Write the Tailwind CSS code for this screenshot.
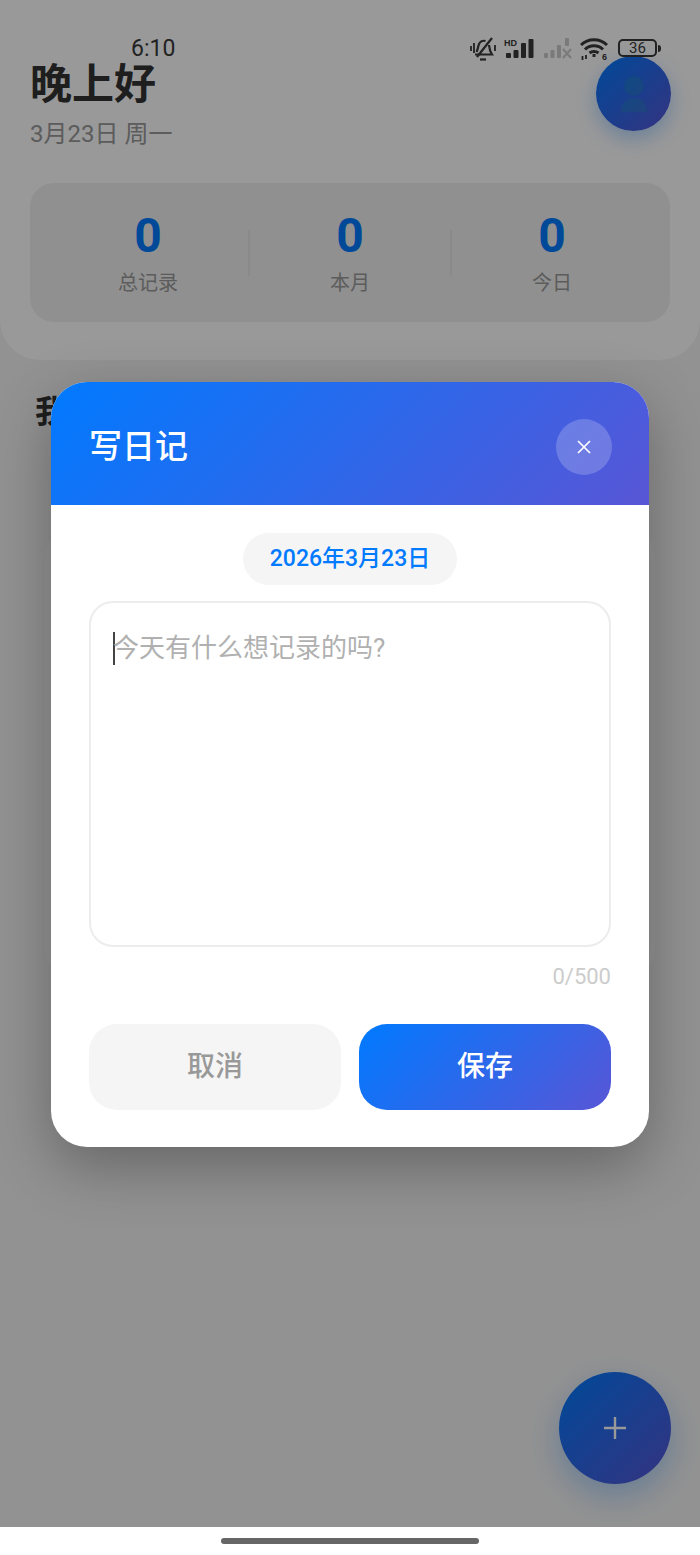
<!DOCTYPE html>
<html lang="zh">
<head>
<meta charset="utf-8">
<script src="https://cdn.jsdelivr.net/npm/@tailwindcss/browser@4"></script>
<title>日记</title>
</head>
<body class="m-0 bg-white font-['Roboto','Noto_Sans_CJK_SC',sans-serif]">
<div class="relative w-[700px] h-[1555px] overflow-hidden bg-white">
  <main class="relative h-[1527px] bg-[#f4f4f4] overflow-hidden">
    <header class="h-[360px] bg-white rounded-b-[40px] px-[30px] pt-[56px]">
      <div class="flex justify-between items-start">
        <div class="pt-[3px]">
          <h1 class="text-[42px] leading-[52px] font-bold text-[#333]">晚上好</h1>
          <p class="text-[24px] leading-[36px] mt-[5px] text-[#999]">3月23日 周一</p>
        </div>
        <div class="w-[75px] h-[75px] -mr-px rounded-full bg-linear-[135deg,#007aff,#5856d6] shadow-[0_8px_20px_rgba(0,122,255,0.3)] flex items-center justify-center">
          <svg width="30" height="40" viewBox="0 0 30 40"><circle cx="15" cy="12" r="10" fill="#1aa0a0" fill-opacity="0.25"/><path d="M2 38c0-8 5-14 13-14s13 6 13 14z" fill="#1aa0a0" fill-opacity="0.25"/></svg>
        </div>
      </div>
      <div class="mt-[31px] h-[139px] rounded-[24px] bg-[#f0f0f0] grid grid-cols-[1fr_2px_1fr_2px_1fr] items-center px-[18px]">
        <div class="flex flex-col items-center">
          <span class="text-[48px] leading-[56px] font-bold text-[#007aff]">0</span>
          <span class="text-[20px] leading-[30px] mt-[4px] text-[#999]">总记录</span>
        </div>
        <span class="h-[46px] bg-[#e6e6e6]"></span>
        <div class="flex flex-col items-center">
          <span class="text-[48px] leading-[56px] font-bold text-[#007aff]">0</span>
          <span class="text-[20px] leading-[30px] mt-[4px] text-[#999]">本月</span>
        </div>
        <span class="h-[46px] bg-[#e6e6e6]"></span>
        <div class="flex flex-col items-center">
          <span class="text-[48px] leading-[56px] font-bold text-[#007aff]">0</span>
          <span class="text-[20px] leading-[30px] mt-[4px] text-[#999]">今日</span>
        </div>
      </div>
    </header>
    <section class="px-[35px] pt-[32px]">
      <h2 class="text-[32px] leading-[40px] font-bold text-[#333]">我的日记</h2>
      <div class="mt-[94px] mx-[10px] h-[454px] rounded-[32px] bg-[#f8f8f8]"></div>
    </section>
    <button class="absolute left-[559px] top-[1372px] w-[112px] h-[112px] rounded-full bg-linear-[135deg,#007aff,#5856d6] shadow-[0_12px_32px_rgba(0,122,255,0.3)] flex items-center justify-center">
      <svg width="24" height="24" viewBox="0 0 24 24" stroke="#fff" stroke-width="2.4"><path d="M12 1v22M1 12h22"/></svg>
    </button>

    <div class="absolute inset-0 bg-black/40 flex items-center justify-center">
      <div class="w-[598px] h-[765px] mt-[2px] rounded-[36px] overflow-hidden bg-white shadow-[0_20px_60px_rgba(0,0,0,0.3)] flex flex-col">
        <div class="h-[123px] shrink-0 bg-linear-[135deg,#007aff,#5856d6] flex items-center justify-between pl-[38px] pr-[37px] pt-[7px]">
          <h3 class="text-[33px] leading-[44px] font-medium text-white">写日记</h3>
          <button class="w-[56px] h-[56px] rounded-full bg-white/20 flex items-center justify-center">
            <svg width="14" height="14" viewBox="0 0 14 14" stroke="#fff" stroke-width="1.7"><path d="M1 1l12 12M13 1L1 13"/></svg>
          </button>
        </div>
        <div class="flex-1 px-[38px] pt-[28px] flex flex-col">
          <div class="self-center w-[214px] h-[52px] rounded-full bg-[#f5f5f5] flex items-center justify-center text-[23px] font-medium text-[#007aff]">2026年3月23日</div>
          <div class="mt-[16px] h-[346px] rounded-[24px] border-2 border-[#ececec] px-[22px] pt-[24px] flex items-start">
            <span class="w-[2px] h-[33px] mt-[5px] bg-[#444] shrink-0"></span>
            <span class="text-[26px] leading-[42px] text-[#b0b0b0] -ml-[2px] mt-0">今天有什么想记录的吗?</span>
          </div>
          <p class="mt-[14px] text-right text-[22px] leading-[32px] text-[#ccc]">0/500</p>
          <div class="mt-[31px] grid grid-cols-2 gap-[18px]">
            <button class="h-[86px] rounded-[28px] bg-[#f5f5f5] text-[28px] font-medium text-[#999]">取消</button>
            <button class="h-[86px] rounded-[28px] bg-linear-[135deg,#007aff,#5856d6] text-[28px] font-medium text-white">保存</button>
          </div>
        </div>
      </div>
    </div>
  </main>

  <div class="absolute left-0 top-[31px] w-full h-[36px] text-[#222]">
    <span class="absolute left-[131px] top-[3px] text-[23px] leading-[30px]">6:10</span>
    <div class="absolute left-[470px] top-[6px] flex items-start gap-[8px]">
      <svg width="26" height="24" viewBox="0 0 26 24" fill="none" stroke="#222" stroke-width="2.200"><path d="M6.500 15c1-2 1.500-4 2-6.500 .7-3.500 3.500-5.500 7-4.500"/><path d="M19 8c.3 3.500 1 6.500 3 9.500H5"/><path d="M22 1L7 20"/><path d="M10 22.500h6"/><path d="M1 9v5M4 6v10M25 8v6" stroke-width="1.800"/></svg>
      <svg width="31" height="24" viewBox="0 0 31 24"><text x="0" y="8.500" font-size="9" font-weight="700" font-family="Liberation Sans" fill="#222">HD</text><g fill="#222"><rect x="2" y="16" width="5" height="5" rx="1"/><rect x="9.500" y="13" width="5" height="8" rx="1"/><rect x="17" y="6" width="5" height="15" rx="1"/><rect x="24.500" y="2" width="5" height="19" rx="1"/></g></svg>
      <svg width="29" height="24" viewBox="0 0 29 24"><g fill="#7a7a7a"><rect x="1" y="16" width="4" height="5" rx="1"/><rect x="7.500" y="13" width="4" height="8" rx="1"/><rect x="14" y="8" width="4" height="13" rx="1"/><rect x="22" y="1" width="4" height="8" rx="1"/></g><path d="M20 12l8 9M28 12l-8 9" stroke="#7a7a7a" stroke-width="2"/></svg>
      <svg width="28" height="24" viewBox="0 0 28 24" fill="none" stroke="#222" stroke-width="3"><path d="M1 8c7-7 19-7 26 0"/><path d="M5 12.500c5-5 13-5 18 0"/><path d="M9.500 16c2.500-2 6.500-2 9 0"/><path d="M12.500 18.500h3" stroke-width="3"/><text x="22" y="23" font-size="9" font-weight="700" font-family="Liberation Sans" fill="#222" stroke="none">6</text><path d="M2.500 19v4M6 18v4" stroke-width="1.800"/></svg>
      <div class="flex items-center ml-[2px] mt-[2px]">
        <div class="w-[39px] h-[18px] rounded-[5px] border-2 border-[#222] flex items-center justify-center text-[15px] leading-none">36</div>
        <span class="w-[3px] h-[7px] ml-[1px] bg-[#222] rounded-r-sm"></span>
      </div>
    </div>
  </div>

  <div class="absolute left-[221px] top-[1538px] w-[258px] h-[6px] rounded-full bg-[#666]"></div>
</div>
</body>
</html>
